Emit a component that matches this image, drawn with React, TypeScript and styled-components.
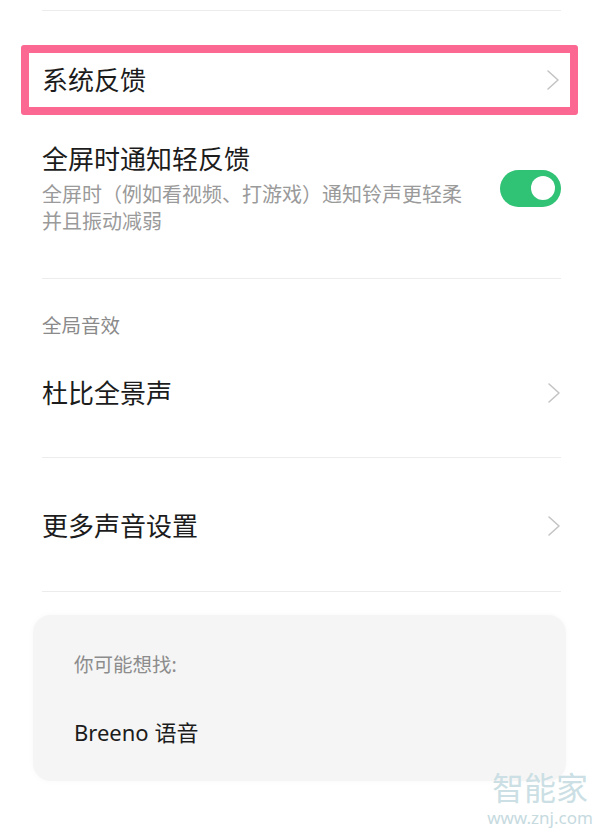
import React from 'react';
import styled, { createGlobalStyle } from 'styled-components';

const GlobalStyle = createGlobalStyle`
  html, body {
    margin: 0;
    padding: 0;
    background: #ffffff;
  }
  body {
    font-family: "Noto Sans", "Noto Sans CJK SC", sans-serif;
    color: #1c1c1c;
  }
`

const Page = styled.div`
  position: relative;
  width: 600px;
  height: 836px;
  overflow: hidden;
  background: #fff;
`

const Divider = styled.div<{ $top?: number }>`
  height: 1px;
  background: #ececec;
  margin: ${p => p.$top || 0}px 39px 0 42px;
`

const Highlight = styled.div`
  margin: 34px 22px 0 21px;
  height: 54px;
  border: 8px solid #fb6892;
  border-radius: 3px;
  display: flex;
  align-items: center;
  justify-content: space-between;
  padding: 0 10px 0 13px;
`

const Row = styled.div<{ $padTop: number; $padBottom: number }>`
  display: flex;
  align-items: center;
  justify-content: space-between;
  padding: ${p => p.$padTop}px 39px ${p => p.$padBottom}px 42px;
`

const RowText = styled.div`
  display: flex;
  flex-direction: column;
`

const Title = styled.div`
  font-size: 26px;
  line-height: 36px;
  color: #1c1c1c;
  white-space: nowrap;
`

const Summary = styled.div`
  margin-top: 4px;
  width: 426px;
  font-size: 20px;
  line-height: 27px;
  color: #9a9a9a;
`

const SectionHeader = styled.div`
  margin: 33px 0 0 42px;
  font-size: 19.5px;
  line-height: 28px;
  color: #8a8a8a;
`

const Switch = styled.div<{ $on: boolean }>`
  position: relative;
  flex-shrink: 0;
  width: 61px;
  height: 37px;
  border-radius: 19px;
  background: ${p => (p.$on ? '#30c275' : '#d6d6d6')};

  &::after {
    content: '';
    position: absolute;
    top: 6.5px;
    ${p => (p.$on ? 'right: 6px;' : 'left: 6px;')}
    width: 24px;
    height: 24px;
    border-radius: 50%;
    background: #fff;
  }
`

const SuggestCard = styled.div`
  margin: 23px 34px 0 33px;
  padding: 36px 41px 33px;
  border-radius: 18px;
  background: #f5f5f5;
  box-shadow: 0 0 6px rgba(0, 0, 0, 0.03);
`

const SuggestLabel = styled.div`
  font-size: 19.5px;
  line-height: 28px;
  color: #8c8c8c;
`

const SuggestItem = styled.div`
  margin-top: 37px;
  font-size: 22px;
  line-height: 32px;
  color: #1c1c1c;
`

const Watermark = styled.div`
  position: absolute;
  left: 490px;
  top: 771px;
  display: flex;
  flex-direction: column;
  align-items: center;
  width: 100px;
  color: #cbdfe4;
`

const WatermarkName = styled.div`
  font-size: 32px;
  line-height: 34px;
`

const WatermarkUrl = styled.div`
  margin-top: 3px;
  font-size: 17px;
  line-height: 20px;
  color: #c6dae0;
`

const Chevron = () => (
  <svg width="14" height="22" viewBox="0 0 14 22" style={{ flexShrink: 0 }}>
    <polyline points="2,2 12,11 2,20" fill="none" stroke="#c4c4c4" strokeWidth="1.6" strokeLinecap="round" strokeLinejoin="round" />
  </svg>
)

const App = () => {
  return (
    <Page>
      <GlobalStyle />
      <Divider $top={10} />

      <Highlight>
        <Title>系统反馈</Title>
        <Chevron />
      </Highlight>

      <Row $padTop={26} $padBottom={43}>
        <RowText>
          <Title>全屏时通知轻反馈</Title>
          <Summary>全屏时（例如看视频、打游戏）通知铃声更轻柔并且振动减弱</Summary>
        </RowText>
        <Switch $on />
      </Row>

      <Divider />

      <SectionHeader>全局音效</SectionHeader>
      <Row $padTop={35} $padBottom={46}>
        <Title>杜比全景声</Title>
        <Chevron />
      </Row>

      <Divider />

      <Row $padTop={50} $padBottom={47}>
        <Title>更多声音设置</Title>
        <Chevron />
      </Row>

      <Divider />

      <SuggestCard>
        <SuggestLabel>你可能想找:</SuggestLabel>
        <SuggestItem>Breeno 语音</SuggestItem>
      </SuggestCard>

      <Watermark>
        <WatermarkName>智能家</WatermarkName>
        <WatermarkUrl>www.znj.com</WatermarkUrl>
      </Watermark>
    </Page>
  )
}

export default App;
